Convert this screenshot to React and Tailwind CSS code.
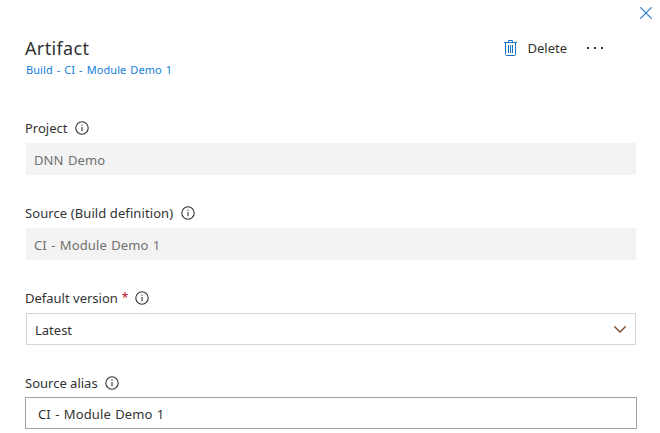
function InfoIcon() {
  return (
    <svg className="size-[14px] shrink-0" viewBox="0 0 14 14" fill="none" stroke="#333" strokeWidth="1.1">
      <circle cx="7" cy="7" r="6.2" />
      <path d="M7 6v4.3" />
      <path d="M7 3.6v1.2" />
    </svg>
  );
}

function Label({ text, required, className = "" }) {
  return (
    <div className="flex h-5 items-center">
      <span className={className}>{text}</span>
      {required && <span className="ml-1 w-[5px] text-[12px] text-[#c00d1c]">*</span>}
      <span className="ml-2 flex">
        <InfoIcon />
      </span>
    </div>
  );
}

function ReadOnlyField({ label, labelClass, value }) {
  return (
    <div className="h-[85px]">
      <Label text={label} className={labelClass} />
      <div className="mt-[5px] mr-px ml-px flex h-8 items-center bg-[#f3f3f3] px-2 pt-[2px] tracking-[0.12px] [word-spacing:0.8px] text-[#707070]">{value}</div>
    </div>
  );
}

export default function App() {
  return (
    <main className="h-[433px] w-[660px] overflow-hidden bg-white font-['Noto_Sans','Open_Sans',sans-serif] text-[13px] leading-5 text-[#333]">
      <div className="flex h-[37px] justify-end pt-[7px] pr-2">
        <svg className="size-3" viewBox="0 0 12 12" fill="none" stroke="#1f78c8" strokeWidth="1.1">
          <path d="M.3.3l11.4 11.4M11.7.3.3 11.7" />
        </svg>
      </div>
      <header className="flex h-[81px] justify-between pl-[25px]">
        <div>
          <h1 className="h-6 text-[18px] leading-[23px] tracking-[0.35px]">Artifact</h1>
          <a className="ml-px block text-[11px] leading-[18px] tracking-[0.08px] [word-spacing:1px] text-[#1480d8]">Build - CI - Module Demo 1</a>
        </div>
        <div className="flex h-[22px] items-center pr-[56px]">
          <svg className="h-4 w-[13px]" viewBox="0 0 13 16" fill="none" stroke="#1474cb" strokeWidth="1">
            <path d="M0 2.5h13M4.5 2.5v-2h4v2M1.5 2.5v12q0 1 1 1h8q1 0 1-1v-12M4.5 5v8M6.5 5v8M8.5 5v8" />
          </svg>
          <span className="ml-[10px]">Delete</span>
          <svg className="ml-[19px] h-[2px] w-[18px]" viewBox="0 0 18 2" fill="#333">
            <path d="M1 0h2v2H1zM8 0h2v2H8zM15 0h2v2h-2z" />
          </svg>
        </div>
      </header>
      <section className="pr-[23px] pl-[25px]">
        <ReadOnlyField label="Project" value="DNN Demo" />
        <ReadOnlyField label="Source (Build definition)" labelClass="tracking-[0.09px]" value="CI - Module Demo 1" />
        <div className="h-[85px]">
          <Label text="Default version" required />
          <div className="mt-[5px] mr-px ml-px flex h-8 items-center justify-between border border-[#d6d6d6] pr-[9px] pl-2">
            <span className="pt-[2px]">Latest</span>
            <svg className="h-[7px] w-3" viewBox="0 0 12 7" fill="none" stroke="#7a4a2c" strokeWidth="1.3">
              <path d="M.4.4 6 6 11.6.4" />
            </svg>
          </div>
        </div>
        <Label text="Source alias" className="mr-[-0.5px]" />
        <div className="mt-[4px] flex h-8 items-center border border-[#a3a3a3] pt-[2px] pl-3 tracking-[0.12px] [word-spacing:0.8px]">CI - Module Demo 1</div>
      </section>
    </main>
  );
}
